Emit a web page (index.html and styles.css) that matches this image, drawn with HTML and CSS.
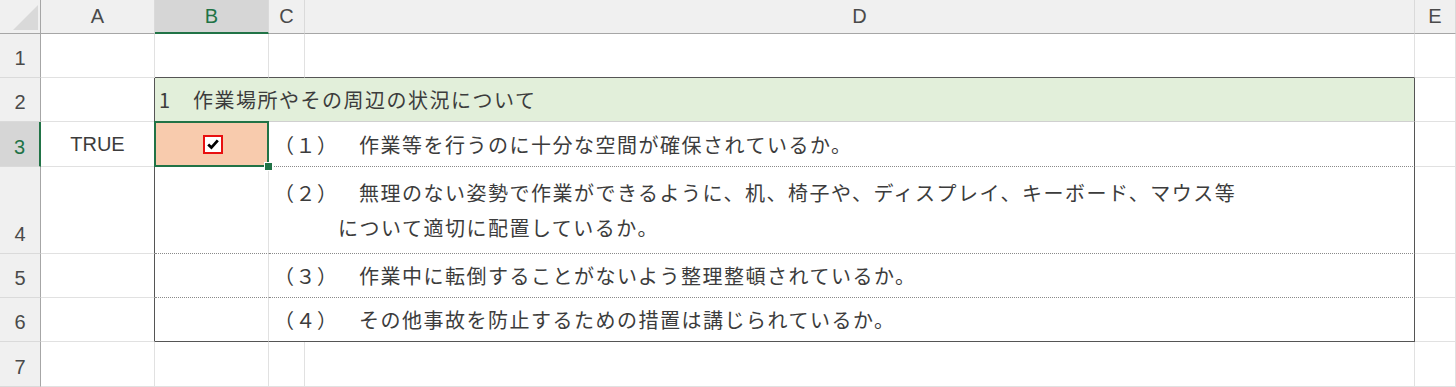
FILE: index.html
```html
<!DOCTYPE html>
<html lang="ja">
<head>
<meta charset="UTF-8" />
<meta name="viewport" content="width=device-width, initial-scale=1" />
<title>チェックリスト</title>
<link rel="stylesheet" href="styles.css">
</head>
<body>

<div class="sheet">
  <!-- column headers -->
  <div class="corner"><span class="tri"></span></div>
  <div class="colhead">A</div>
  <div class="colhead sel">B</div>
  <div class="colhead">C</div>
  <div class="colhead">D</div>
  <div class="colhead">E</div>

  <!-- row 1 -->
  <div class="rowhead">1</div>
  <div class="cell"></div>
  <div class="cell box-top"></div>
  <div class="cell box-top"></div>
  <div class="cell box-top"></div>
  <div class="cell"></div>

  <!-- row 2 -->
  <div class="rowhead">2</div>
  <div class="cell box-left"></div>
  <div class="cell title box-right">1　作業場所やその周辺の状況について</div>
  <div class="cell"></div>

  <!-- row 3 -->
  <div class="rowhead sel">3</div>
  <div class="cell box-left value">TRUE</div>
  <div class="cell checked">
    <span class="check">
      <svg width="12" height="11" viewBox="0 0 12 11"><path d="M1.2 5.6 L4.4 8.6 L10.8 1.4" fill="none" stroke="#000" stroke-width="2.8"/></svg>
    </span>
    <span class="handle"></span>
  </div>
  <div class="cell item dotted box-right"><span class="no">（１）　</span>作業等を行うのに十分な空間が確保されているか。</div>
  <div class="cell"></div>

  <!-- row 4 -->
  <div class="rowhead">4</div>
  <div class="cell box-left"></div>
  <div class="cell dotted"></div>
  <div class="cell item dotted box-right">
    <div class="lines">
      <div><span class="no">（２）　</span>無理のない姿勢で作業ができるように、机、椅子や、ディスプレイ、キーボード、マウス等</div>
      <div class="cont">について適切に配置しているか。</div>
    </div>
  </div>
  <div class="cell"></div>

  <!-- row 5 -->
  <div class="rowhead">5</div>
  <div class="cell box-left"></div>
  <div class="cell dotted"></div>
  <div class="cell item dotted box-right"><span class="no">（３）　</span>作業中に転倒することがないよう整理整頓されているか。</div>
  <div class="cell"></div>

  <!-- row 6 -->
  <div class="rowhead">6</div>
  <div class="cell box-left"></div>
  <div class="cell box-bottom"></div>
  <div class="cell item box-bottom box-right"><span class="no">（４）　</span>その他事故を防止するための措置は講じられているか。</div>
  <div class="cell"></div>

  <!-- row 7 -->
  <div class="rowhead">7</div>
  <div class="cell"></div>
  <div class="cell"></div>
  <div class="cell"></div>
  <div class="cell"></div>
  <div class="cell"></div>
</div>

</body>
</html>
```

FILE: styles.css
```css
body {
  margin: 0; background: #fff; overflow: hidden;
  font-family: "Liberation Sans", "Noto Sans CJK JP", sans-serif;
}
.sheet {
  display: grid;
  grid-template-columns: 41px 114px 114px 36px 1110px 41px;
  grid-template-rows: 34px 44px 44px 45px 87px 44px 44px 45px;
}

/* headers */
.corner {
  background: #f0f0f0; position: relative;
  border-right: 1px solid #a6a6a6; border-bottom: 1px solid #a6a6a6;
}
.corner .tri {
  position: absolute; left: 13px; top: 5px; width: 25px; height: 25px;
  background: #d9d9d9; clip-path: polygon(100% 0, 100% 100%, 0 100%);
}
.colhead {
  background: #f0f0f0; color: #4a4a4a; font-size: 20px;
  display: flex; align-items: center; justify-content: center;
  border-right: 1px solid #dadada; border-bottom: 1px solid #a6a6a6;
}
.colhead.sel {
  background: #d6d6d6; color: #217346; border-bottom: 2px solid #217346;
}
.rowhead {
  background: #f0f0f0; color: #4a4a4a; font-size: 20px;
  display: flex; align-items: flex-end; justify-content: center; padding-bottom: 7px;
  border-right: 1px solid #a6a6a6; border-bottom: 1px solid #dadada;
}
.rowhead.sel {
  background: #d6d6d6; color: #217346; border-right: 2px solid #217346;
}
.colhead, .rowhead, .corner, .cell { box-sizing: border-box; }

/* cells */
.cell {
  border-right: 1px solid #e1e1e1; border-bottom: 1px solid #e1e1e1;
  display: flex; align-items: center; white-space: nowrap;
  color: #3c3c3c; font-size: 20px; position: relative;
}
.box-top { border-bottom-color: #555; }
.box-left { border-right-color: #555; }
.box-right { border-right-color: #555; }
.box-bottom { border-bottom-color: #555; }
.dotted { border-bottom: 1px dotted #8a8a8a; }
.dotted.box-right { border-right: 1px solid #555; }

.title {
  grid-column: span 3; background: #e2efda; padding-left: 4px;
  font-family: "Noto Sans CJK JP", sans-serif; letter-spacing: 1.5px;
  border-bottom-color: #d0d0d0;
}
.value { justify-content: center; }
.item {
  grid-column: span 2; padding-left: 5px;
  font-family: "Noto Sans CJK JP", sans-serif; letter-spacing: 1.5px;
}
.item .no { margin-right: 9px; }
.lines { line-height: 35px; }
.lines .cont { padding-left: 64px; }

/* selected checkbox cell */
.checked { background: #f8cbad; justify-content: center; }
.checked::after {
  content: ""; position: absolute; left: -1px; top: -1px; right: -1px; bottom: -1px;
  border: 2px solid #217346;
}
.check {
  width: 20px; height: 19px; box-sizing: border-box; margin-left: 2px;
  border: 2px solid #e81010; background: #fff;
  display: flex; align-items: center; justify-content: center;
}
.handle {
  position: absolute; right: -5px; bottom: -5px; width: 7px; height: 7px;
  background: #217346; border: 1px solid #fff; z-index: 2;
}
```
